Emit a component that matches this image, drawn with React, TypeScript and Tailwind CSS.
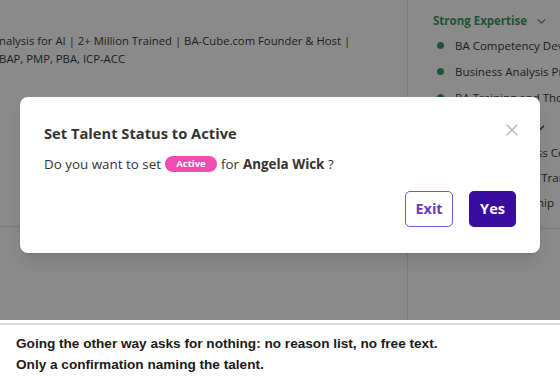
import { X, ChevronDown } from 'lucide-react';

// Right-hand expertise list, behind the dialog
const expertise = [
  'BA Competency Development',
  'Business Analysis Practice',
  'BA Training and Thought Leadership',
];

const moreItems = ['Modern Business Coaching', 'Corporate Agile Trainings', 'Project Ownership'];

const App = () => {
  return (
    <div className="w-[560px] h-[382px] overflow-hidden bg-white" style={{ fontFamily: '"Open Sans", "Noto Sans", sans-serif' }}>
      {/* page under the dialog */}
      <div className="relative h-[320px] overflow-hidden">
        <div className="flex h-full">
          <div className="w-[407px] flex-shrink-0 flex flex-col">
            <div className="pt-[32px] pb-[158px] text-[11.3px] leading-[18px] text-[#3a3a3a] whitespace-nowrap">
              <div className="-ml-[1px]">nalysis for AI | 2+ Million Trained | BA-Cube.com Founder &amp; Host |</div>
              <div className="-ml-[8px]">CBAP, PMP, PBA, ICP-ACC</div>
            </div>
            <div className="border-t border-[#e4e4e4]"></div>
          </div>
          <div className="flex-1 min-w-0 border-l border-[#e4e4e4] flex flex-col">
            <div className="pl-[25px] pt-[12px] h-[228px] overflow-hidden whitespace-nowrap">
              <div className="flex items-center gap-[8px] text-[11.5px] font-bold text-[#3a9a62] h-[18px]">
                Strong Expertise <ChevronDown size={13} strokeWidth={2.5} />
              </div>
              <ul className="mt-[6px] flex flex-col gap-[7px] text-[11.5px] text-[#3a3a3a]">
                {expertise.map((t) => (
                  <li key={t} className="flex items-center gap-[11px] pl-[4px] h-[19px]">
                    <span className="w-[7px] h-[7px] rounded-full bg-[#3a9a62] flex-shrink-0"></span>
                    {t}
                  </li>
                ))}
              </ul>
              <div className="mt-[12px] flex items-center justify-between pr-[13px] text-[11.5px] font-bold text-[#4f24c8] h-[18px]">
                <span>Other Services</span>
                <ChevronDown size={14} strokeWidth={2.5} />
              </div>
              <ul className="mt-[6px] flex flex-col gap-[6px] text-[11.5px] text-[#3a3a3a]">
                {moreItems.map((t) => (
                  <li key={t} className="flex items-center gap-[11px] pl-[4px] h-[19px]">
                    <span className="w-[7px] h-[7px] rounded-full bg-[#4f24c8] flex-shrink-0"></span>
                    {t}
                  </li>
                ))}
              </ul>
            </div>
            <div className="border-t border-[#e4e4e4]"></div>
          </div>
        </div>

        {/* dim layer + dialog */}
        <div className="absolute inset-0 bg-black/[0.46] px-5 pt-[97px]">
          <div className="relative bg-white rounded-lg shadow-lg px-6 pt-[26px] pb-[26px]">
            <button className="absolute right-[18px] top-[23px] text-[#b4b4b4]">
              <X size={20} strokeWidth={1.5} />
            </button>
            <h2 className="text-[14.7px] font-bold text-[#333] leading-[20px]">Set Talent Status to Active</h2>
            <p className="mt-[11px] text-[13.4px] text-[#333] leading-[20px] flex items-center">
              Do you want to set
              <span className="mx-[4px] inline-flex items-center justify-center h-[16px] w-[52px] rounded-full bg-[#ef4bb3] text-white text-[9.5px] font-bold">
                Active
              </span>
              for <b className="ml-[4px]">Angela Wick</b>&nbsp;?
            </p>
            <div className="mt-[17px] flex justify-end gap-4">
              <button className="w-[48px] h-[36px] rounded-[5px] border border-[#8055c0] text-[#6a3db5] text-[14.5px] font-bold">
                Exit
              </button>
              <button className="w-[47px] h-[36px] rounded-[5px] bg-[#3b0d9f] text-white text-[14.5px] font-bold">
                Yes
              </button>
            </div>
          </div>
        </div>
      </div>

      <div className="h-[3px]"></div>
      <div className="h-[2px] bg-[#dcdcdc]"></div>
      <div className="px-4 pt-[8px] text-[13.6px] leading-[21px] font-bold text-[#1a1a1a]" style={{ fontFamily: '"Liberation Sans", Arial, sans-serif' }}>
        <p>Going the other way asks for nothing: no reason list, no free text.</p>
        <p>Only a confirmation naming the talent.</p>
      </div>
    </div>
  );
};

export default App;
